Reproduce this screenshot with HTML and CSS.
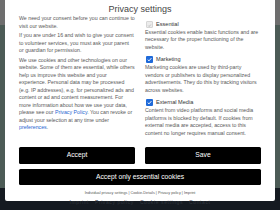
FILE: index.html
```html
<!DOCTYPE html>
<html lang="en">
<head>
<meta charset="utf-8">
<title>Privacy settings</title>
<link rel="stylesheet" href="styles.css">
</head>
<body>
<div class="modal">
  <h1 class="title">Privacy settings</h1>
  <div class="cols">
    <div class="intro">
      <p>We need your consent before you can continue to visit our website.</p>
      <p>If you are under 16 and wish to give your consent to volunteer services, you must ask your parent or guardian for permission.</p>
      <p>We use cookies and other technologies on our website. Some of them are essential, while others help us improve this website and your experience. Personal data may be processed (e.g. IP addresses), e.g. for personalized ads and content or ad and content measurement. For more information about how we use your data, please see our <a class="link" href="#">Privacy Policy</a>. You can revoke or adjust your selection at any time under <a class="link" href="#">preferences</a>.</p>
    </div>
    <div class="options">
      <div class="option">
        <div class="opt-head">
          <span class="box box-disabled"><svg viewBox="0 0 7 7" width="7" height="7"><path d="M1.7 3.6 L3 4.9 L5.4 2.1" fill="none" stroke="#a8a8a8" stroke-width="0.9"/></svg></span>
          <span class="opt-label">Essential</span>
        </div>
        <p class="opt-desc">Essential cookies enable basic functions and are necessary for the proper functioning of the website.</p>
      </div>
      <div class="option">
        <div class="opt-head">
          <span class="box box-on"><svg viewBox="0 0 7 7" width="7" height="7"><path d="M1.7 3.6 L3 4.9 L5.4 2.1" fill="none" stroke="#fff" stroke-width="0.9"/></svg></span>
          <span class="opt-label">Marketing</span>
        </div>
        <p class="opt-desc">Marketing cookies are used by third-party vendors or publishers to display personalized advertisements. They do this by tracking visitors across websites.</p>
      </div>
      <div class="option">
        <div class="opt-head">
          <span class="box box-on"><svg viewBox="0 0 7 7" width="7" height="7"><path d="M1.7 3.6 L3 4.9 L5.4 2.1" fill="none" stroke="#fff" stroke-width="0.9"/></svg></span>
          <span class="opt-label">External Media</span>
        </div>
        <p class="opt-desc">Content from video platforms and social media platforms is blocked by default. If cookies from external media are accepted, access to this content no longer requires manual consent.</p>
      </div>
    </div>
  </div>
  <div class="actions">
    <button class="btn">Accept</button>
    <button class="btn">Save</button>
    <button class="btn btn-wide">Accept only essential cookies</button>
  </div>
  <div class="links">
    <a href="#">Individual privacy settings</a> | <a href="#">Cookie-Details</a> | <a href="#">Privacy policy</a> | <a href="#">Imprint</a>
  </div>
</div>
<div class="site-footer">Imprint &nbsp; Privacy policy &nbsp; Cookie settings &nbsp; Contact</div>
</body>
</html>
```
FILE: styles.css
```css
html, body {
  margin: 0;
  padding: 0;
}
body {
  width: 280px;
  height: 210px;
  overflow: hidden;
  font-family: "Liberation Sans", Arial, sans-serif;
  background: linear-gradient(to bottom, #6e6e6e 0, #6e6e6e 25px, #4c5b56 25px, #4c5b56 188px, #151a21 188px);
}
.modal {
  width: 270px;
  margin-left: 5px;
  box-sizing: border-box;
  padding: 4px 14px 6.5px;
  background: #fff;
  border-radius: 0 0 2px 2px;
}
.title {
  margin: 0;
  font-size: 9px;
  line-height: 11px;
  font-weight: normal;
  color: #454545;
  text-align: center;
}
.cols {
  display: grid;
  grid-template-columns: 116px 116px;
  column-gap: 10px;
}
.intro p, .opt-desc {
  margin: 0;
  font-size: 5.25px;
  line-height: 7.5px;
  color: #5a5a5a;
}
.intro p {
  margin-bottom: 2.2px;
}
.link {
  color: #1f66d1;
  text-decoration: none;
}
.options {
  padding-top: 4.5px;
}
.option {
  margin-bottom: 4px;
}
.option:last-child {
  margin-bottom: 0;
}
.opt-head {
  display: flex;
  align-items: center;
  height: 9px;
  gap: 3px;
  padding-left: 1px;
}
.box {
  width: 7px;
  height: 7px;
  border-radius: 1px;
  box-sizing: border-box;
  display: flex;
}
.box svg {
  display: block;
}
.box-disabled {
  background: #ececec;
  border: 0.5px solid #d6d6d6;
}
.box-on {
  background: #1f6ad9;
}
.opt-label {
  font-size: 5.6px;
  line-height: 9px;
  color: #333;
}
.actions {
  margin-top: 10px;
  display: grid;
  grid-template-columns: 116px 116px;
  column-gap: 10px;
  row-gap: 5px;
}
.btn {
  height: 16.5px;
  margin: 0;
  padding: 0;
  border: 0;
  border-radius: 1.5px;
  background: #000;
  color: #fff;
  font-family: "Liberation Sans", Arial, sans-serif;
  font-size: 6.75px;
  line-height: 16.5px;
  text-align: center;
}
.btn-wide {
  grid-column: 1 / 3;
}
.links {
  margin-top: 5.5px;
  font-size: 3.75px;
  line-height: 4px;
  color: #555;
  text-align: center;
}
.links a {
  color: #555;
  text-decoration: none;
}
.site-footer {
  margin-top: -2px;
  font-size: 5px;
  line-height: 7px;
  color: #2f353e;
  text-align: center;
  letter-spacing: 0.6px;
}
```
